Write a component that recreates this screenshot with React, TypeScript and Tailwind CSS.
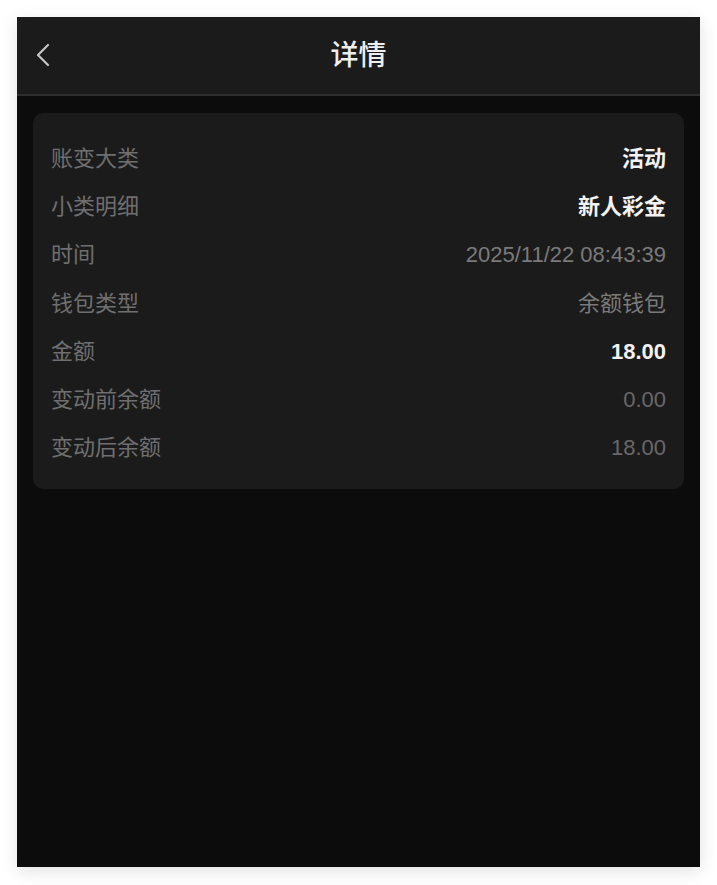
import React from 'react';

type Row = { label: string; value: string; tone: 'strong' | 'mid' | 'dim' };

const rows: Row[] = [
  { label: '账变大类', value: '活动', tone: 'strong' },
  { label: '小类明细', value: '新人彩金', tone: 'strong' },
  { label: '时间', value: '2025/11/22 08:43:39', tone: 'mid' },
  { label: '钱包类型', value: '余额钱包', tone: 'mid' },
  { label: '金额', value: '18.00', tone: 'strong' },
  { label: '变动前余额', value: '0.00', tone: 'dim' },
  { label: '变动后余额', value: '18.00', tone: 'dim' },
];

const toneClass = {
  strong: 'text-[#f2f2f2] font-bold',
  mid: 'text-[#7a7a7a]',
  dim: 'text-[#686868]',
};

function BackIcon() {
  return (
    <svg width="18" height="26" viewBox="0 0 18 26" fill="none">
      <path d="M14 3 L4 13 L14 23" stroke="#c4c4c4" strokeWidth="2.2" strokeLinecap="round" strokeLinejoin="round" />
    </svg>
  );
}

export default function App() {
  return (
    <div className="min-h-screen bg-white pt-[17px] pl-[17px]" style={{ fontFamily: '"Liberation Sans", Arial, "Noto Sans CJK SC", sans-serif' }}>
      <div className="w-[683px] h-[850px] bg-[#0c0c0c] flex flex-col shadow-[0_4px_16px_rgba(0,0,0,0.12)]">
        <header className="relative h-[79px] shrink-0 bg-[#1b1b1b] border-b-2 border-[#2e2e2e] flex items-center justify-center">
          <button className="absolute left-[17px] top-[25px]">
            <BackIcon />
          </button>
          <h1 className="text-[28px] text-[#eeeeee] font-medium">详情</h1>
        </header>

        <div className="px-4 pt-[17px]">
          <div className="bg-[#1b1b1b] rounded-[10px] pl-[18px] pr-[18px] pt-[21px] pb-[17px]">
            {rows.map((r) => (
              <div key={r.label} className="h-[48.3px] flex items-center justify-between text-[22px]">
                <span className="text-[#6f6f6f]">{r.label}</span>
                <span className={toneClass[r.tone]}>{r.value}</span>
              </div>
            ))}
          </div>
        </div>
      </div>
    </div>
  );
}
